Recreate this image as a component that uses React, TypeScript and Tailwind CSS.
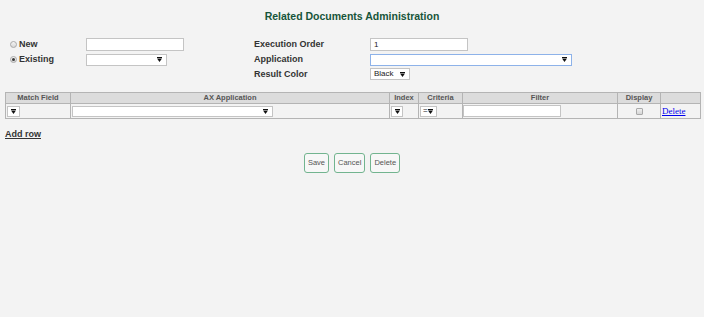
import React from "react";

const Arrow = () => (
  <svg width="5" height="5" viewBox="0 0 5 5" className="shrink-0">
    <rect x="0" y="0" width="5" height="1" fill="#111" />
    <polygon points="0,1.5 5,1.5 2.5,5" fill="#111" />
  </svg>
);

const Select = ({ w, h = 12, text = "", blue = false, pr = 4, pl = 3 }: { w: number; h?: number; text?: string; blue?: boolean; pr?: number; pl?: number }) => (
  <div
    className={`flex items-center justify-between bg-white border ${blue ? "border-[#8db2e9]" : "border-[#c4c4c4]"} text-[8px] leading-none text-[#222] box-border`}
    style={{ width: w, height: h, paddingRight: pr, paddingLeft: pl }}
  >
    <span>{text}</span>
    <Arrow />
  </div>
);

const Input = ({ w, h = 13, text = "" }: { w: number; h?: number; text?: string }) => (
  <div
    className="flex items-center bg-white border border-[#c4c4c4] pl-[3px] text-[8px] leading-none text-[#222] box-border"
    style={{ width: w, height: h }}
  >
    {text}
  </div>
);

const Radio = ({ checked = false }: { checked?: boolean }) => (
  <div className="w-[7px] h-[7px] rounded-full border border-[#a9a9a9] bg-gradient-to-b from-[#f4f4f4] to-[#d8d8d8] flex items-center justify-center box-border">
    {checked && <div className="w-[3px] h-[3px] rounded-full bg-[#3a3a3a]" />}
  </div>
);

const Label = ({ children }: { children: React.ReactNode }) => (
  <span className="text-[9px] font-bold text-[#333] leading-none">{children}</span>
);

const Th = ({ children, last = false }: { children?: React.ReactNode; last?: boolean }) => (
  <div className={`h-[11px] flex items-center justify-center bg-[#dcdcdc] border-b border-[#b4b4b4] ${last ? "" : "border-r"} text-[7.5px] font-bold text-[#555] leading-none`}>
    {children}
  </div>
);

const Td = ({ children, last = false, className = "" }: { children?: React.ReactNode; last?: boolean; className?: string }) => (
  <div className={`h-[14px] flex items-center border-[#b4b4b4] ${last ? "" : "border-r"} ${className}`}>{children}</div>
);

export default function App() {
  return (
    <div
      className="w-full min-h-[317px] bg-[#f3f3f3] leading-none"
      style={{ fontFamily: '"Liberation Sans", Arial, sans-serif' }}
    >
      <div className="pt-[10px] text-center text-[10.5px] leading-[13px] font-bold text-[#17553a]">
        Related Documents Administration
      </div>

      <div className="mt-[14px] pl-[10px] flex flex-col">
        <div className="flex items-center h-[15px]">
          <div className="w-[76px] flex items-center gap-[2px]">
            <Radio />
            <Label>New</Label>
          </div>
          <div className="w-[168px] flex items-center">
            <Input w={98} />
          </div>
          <div className="w-[116px] flex items-center">
            <Label>Execution Order</Label>
          </div>
          <Input w={98} text="1" />
        </div>
        <div className="flex items-center h-[15px]">
          <div className="w-[76px] flex items-center gap-[2px]">
            <Radio checked />
            <Label>Existing</Label>
          </div>
          <div className="w-[168px] flex items-center">
            <Select w={81} />
          </div>
          <div className="w-[116px] flex items-center">
            <Label>Application</Label>
          </div>
          <Select w={202} blue />
        </div>
        <div className="flex items-center h-[14px]">
          <div className="w-[76px]" />
          <div className="w-[168px]" />
          <div className="w-[116px] flex items-center">
            <Label>Result Color</Label>
          </div>
          <Select w={40} text="Black" />
        </div>
      </div>

      <div className="mt-[11px] ml-[5px] w-[696px] border border-[#b4b4b4] grid grid-cols-[65px_319px_29px_44px_155px_43px_39px]">
        <Th>Match Field</Th>
        <Th>AX Application</Th>
        <Th>Index</Th>
        <Th>Criteria</Th>
        <Th>Filter</Th>
        <Th>Display</Th>
        <Th last />

        <Td className="pl-[1px]"><Select w={13} h={11} pr={3} /></Td>
        <Td className="pl-[1px]"><Select w={201} h={11} /></Td>
        <Td className="pl-[1px]"><Select w={12} h={11} pr={3} /></Td>
        <Td className="pl-[1px]"><Select w={17} h={11} text="=" pr={3} pl={2} /></Td>
        <Td className="pl-[0px]"><Input w={98} h={12} /></Td>
        <Td className="justify-center">
          <div className="w-[7px] h-[7px] rounded-[1px] border border-[#a9a9a9] bg-gradient-to-b from-[#f0f0f0] to-[#d6d6d6] box-border" />
        </Td>
        <Td last className="pl-[1px]">
          <a
            href="#"
            className="text-[9px] leading-none text-[#0000ee] underline"
            style={{ fontFamily: '"Liberation Serif", "Times New Roman", serif' }}
          >
            Delete
          </a>
        </Td>
      </div>

      <div className="mt-[10px] pl-[5px] flex">
        <a href="#" className="text-[9px] leading-[11px] font-bold text-[#333] underline">
          Add row
        </a>
      </div>

      <div className="mt-[13px] flex justify-center gap-[5px]">
        {["Save", "Cancel", "Delete"].map((t) => (
          <button
            key={t}
            className="h-[20px] px-[3px] rounded-[3px] border border-[#72b48f] bg-[#f7f7f7] text-[7.5px] text-[#555] leading-none"
          >
            {t}
          </button>
        ))}
      </div>
    </div>
  );
}
